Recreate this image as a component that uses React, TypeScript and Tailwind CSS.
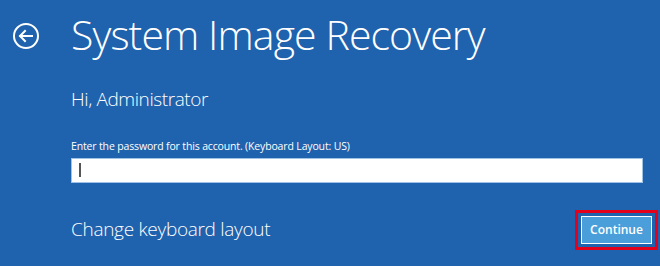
import React from 'react';

function BackIcon() {
  return (
    <svg width="28" height="28" viewBox="0 0 28 28" fill="none" stroke="white" strokeWidth="2">
      <circle cx="14" cy="14" r="12" />
      <path d="M8 14h12M13 9l-5 5 5 5" strokeLinecap="square" />
    </svg>
  );
}

export default function App() {
  return (
    <div className="w-[660px] h-[266px] overflow-hidden bg-[#1f62ad] text-white font-['Open_Sans',sans-serif]">
      <div className="flex items-center h-[70px]">
        <div className="w-[71px] pl-[12px] pt-[1px]">
          <BackIcon />
        </div>
        <h1 className="text-[41px] font-light leading-none tracking-[-0.9px] -mt-[2px]">System Image Recovery</h1>
      </div>
      <div className="pl-[71px] pr-[17px]">
        <p className="mt-[20px] text-[19px] font-light leading-none tracking-[-0.4px]">Hi, Administrator</p>
        <p className="mt-[32px] text-[10.5px] leading-none tracking-[-0.15px]">Enter the password for this account. (Keyboard Layout: US)</p>
        <div className="mt-[6px] h-[25px] bg-white border border-[#9fc3e6] flex items-center pl-[7px]">
          <div className="w-[2px] h-[14px] bg-[#555]" />
        </div>
        <div className="mt-[27px] flex items-center justify-between">
          <span className="text-[19px] font-light leading-none tracking-[-0.3px]">Change keyboard layout</span>
          <div className="-mr-[15px] border-[3px] border-[#e3001b] p-[3px]">
            <button className="h-[28px] w-[71px] border border-white bg-[#4a9fdb] text-[12px] font-semibold text-white">Continue</button>
          </div>
        </div>
      </div>
    </div>
  );
}
